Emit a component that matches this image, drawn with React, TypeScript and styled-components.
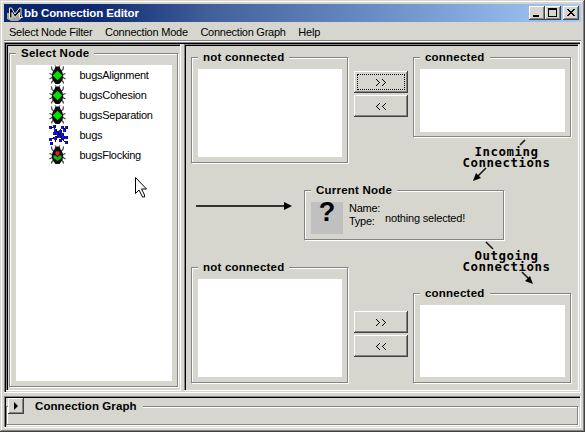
import React from "react";
import styled, { createGlobalStyle } from "styled-components";

const face = "#d6d6ce";
const shade = "#848484";

const GlobalStyle = createGlobalStyle`
  * { box-sizing: border-box; }
  body { margin: 0; background: ${face}; overflow: hidden; }
`;

const Window = styled.div`
  position: relative;
  width: 585px;
  height: 432px;
  padding: 4px;
  display: flex;
  flex-direction: column;
  background: ${face};
  color: #000;
  font: 11px/14px "Liberation Sans", Arial, sans-serif;
  white-space: nowrap;
  cursor: default;
  box-shadow: inset -1px -1px #424142, inset 1px 1px ${face}, inset -2px -2px ${shade}, inset 2px 2px #fff;
`;

const TitleBar = styled.header`
  width: 577px;
  height: 18px;
  padding: 0 2px 0 0;
  display: flex;
  align-items: center;
  background: linear-gradient(to right, #08246b 0%, #0c2870 15%, #42619c 36%, #6b8ec6 65%, #a5cbf7 100%);
`;

const Title = styled.h1`
  margin: 0;
  flex: 1;
  color: #fff;
  font: bold 11.5px/18px "Liberation Sans", Arial, sans-serif;
  letter-spacing: -0.1px;
`;

const WindowButton = styled.button<{ $gap?: boolean }>`
  width: 16px;
  height: 14px;
  margin: 0 0 0 ${(p) => (p.$gap ? 2 : 0)}px;
  padding: 0;
  border: 0;
  background: ${face};
  box-shadow: inset -1px -1px #424142, inset 1px 1px #fff, inset -2px -2px ${shade};
  svg { display: block; }
`;

const MenuBar = styled.nav`
  width: 577px;
  height: 20px;
  padding: 3px 5px 0;
  display: flex;
  gap: 12.5px;
  border-bottom: 1px solid #fff;
  box-shadow: inset 0 -1px ${shade};
`;

const MenuItem = styled.span<{ $spacing?: number }>`
  letter-spacing: ${(p) => p.$spacing ?? -0.22}px;
`;

const Workspace = styled.main`
  width: 577px;
  height: 351px;
  display: flex;
  gap: 3px;
  padding: 2px;
  box-shadow: inset -1px -1px #fff, inset 1px 1px ${shade}, inset 2px 2px #000;
`;

const Pane = styled.section<{ $width: number }>`
  width: ${(p) => p.$width}px;
  height: 347px;
  box-shadow: inset -1px -1px #fff, inset 1px 1px ${shade}, inset 2px 2px #000;
`;

const ListPane = styled(Pane)`
  padding: 9px 2px 2px 3px;
`;

const EditorPane = styled(Pane)`
  padding: 13px 6px 6px 7px;
  display: grid;
  grid-template-rows: 107px 51px 117px;
  row-gap: 26px;
`;

const Group = styled.div<{ $height: number }>`
  position: relative;
  height: ${(p) => p.$height}px;
  padding: 12px 7px 6px;
  border: 1px solid ${shade};
  border-right-color: #fff;
  border-bottom-color: #fff;
  box-shadow: inset -1px -1px ${shade}, inset 1px 1px #fff;
`;

const GroupLabel = styled.span<{ $spacing?: number }>`
  position: absolute;
  left: 6px;
  top: -8px;
  padding: 0 5px;
  background: ${face};
  font: bold 11.5px/15px "Liberation Sans", Arial, sans-serif;
  letter-spacing: ${(p) => p.$spacing ?? 0.22}px;
`;

const ListBox = styled.div<{ $height: number }>`
  height: ${(p) => p.$height}px;
  margin: -1px;
  background: #fff;
`;

const NodeRow = styled.div`
  height: 20px;
  padding-left: 32px;
  display: flex;
  align-items: center;
  gap: 11.5px;
  letter-spacing: -0.28px;
  svg { flex: none; }
`;

const TransferRow = styled.div`
  display: grid;
  grid-template-columns: 158px 54px 159px;
  column-gap: 5px;
  align-items: start;
`;

const LowerTransferRow = styled(TransferRow)`
  align-items: end;
`;

const MoveButtons = styled.div<{ $upper?: boolean }>`
  padding: ${(p) => (p.$upper ? "14px 0 0" : "0 0 27px")};
  display: flex;
  flex-direction: column;
  gap: 2px;
`;

const Button = styled.button`
  width: 54px;
  height: 22px;
  padding: 0;
  border: 0;
  display: grid;
  place-items: center;
  background: ${face};
  box-shadow: inset -1px -1px #424142, inset 1px 1px #fff, inset -2px -2px ${shade};
`;

const FocusRing = styled.span`
  width: 48px;
  height: 16px;
  border: 1px dotted #000;
  display: grid;
  place-items: center;
`;

const FlowRow = styled.div`
  display: flex;
  gap: 12px;
  padding-left: 5px;
`;

const CurrentNode = styled(Group)`
  width: 201px;
  padding: 11px 6px;
  display: flex;
  gap: 6px;
`;

const UnknownIcon = styled.span`
  width: 32px;
  height: 32px;
  background: #c0c0c0;
  text-align: center;
  font: bold 27px/21px "Liberation Sans", Arial, sans-serif;
`;

const Fields = styled.div`
  width: 30px;
  line-height: 13px;
  letter-spacing: -0.25px;
`;

const Selection = styled.span`
  padding-top: 9px;
  letter-spacing: -0.18px;
`;

const Caption = styled.div<{ $top: number }>`
  position: absolute;
  left: 462px;
  top: ${(p) => p.$top}px;
  width: 89px;
  text-align: center;
  font: bold 12.4px/11px "DejaVu Sans Mono", monospace;
  letter-spacing: 0.52px;
`;

const Overlay = styled.svg`
  position: absolute;
  left: 0;
  top: 0;
  pointer-events: none;
`;

const GraphPanel = styled.footer`
  width: 577px;
  height: 32px;
  margin-top: 3px;
  padding: 2px;
  box-shadow: inset -1px -1px #fff, inset 1px 1px ${shade}, inset 2px 2px #000;
`;

const GraphGroup = styled(Group)`
  width: 573px;
  margin-top: 8px;
  padding: 0;
`;

const GraphLabel = styled(GroupLabel)`
  left: 17px;
  padding: 0 6px 0 11px;
`;

const Expander = styled.button`
  position: absolute;
  left: 1px;
  top: -9px;
  width: 16px;
  height: 16px;
  padding: 0;
  border: 0;
  z-index: 1;
  background: ${face};
  box-shadow: inset -1px -1px #424142, inset 1px 1px #fff, inset -2px -2px ${shade};
  svg { display: block; }
`;

const Beetle = ({ spotted = false }: { spotted?: boolean }) => (
  <svg width="20" height="20" viewBox="0 0 20 20">
    <path
      d="M3.500 1.500L4 4.500l3 2.500M15.500 1.500L15 4.500l-3 2.500M1.500 8.500l2.500 1h3M17.500 8.500l-2.500 1h-3M1.500 14l2.500-1.500h3M17.500 14L15 12.500h-3M3.500 18.500L4 16.500l3-2.500M15.500 18.500L15 16.500l-3-2.500"
      fill="none"
      stroke="#3c3c3c"
      strokeWidth="1.2"
    />
    <path d="M8 2L7 0M11 2l1-2" stroke="#777" fill="none" />
    <path d="M7.500 1.500h4l1.200 3 1.800 3 .8 3.500-.8 4-3 4h-4l-3-4-.8-4 .8-3.500 1.800-3z" fill="#0c0c0c" />
    {spotted ? (
      <>
        <path d="M5.500 10.500h2.500l1.500 2 1.500-2h2.500v2.500l-4 3-4-3z" fill="#10b818" />
        <path d="M7.500 7l2-1 2 1v2l-2 2-2-2z" fill="#ff1824" />
      </>
    ) : (
      <path d="M9.500 5.800l4.800 4.700-4.800 4.700-4.800-4.700z" fill="#00e400" />
    )}
  </svg>
);

const swarmDots = [
  [2, 2], [6, 1], [14, 2], [18, 2], [7, 5], [12, 6], [16, 5], [9, 8], [14, 9],
  [6, 8], [18, 12], [11, 11], [7, 13], [15, 12], [2, 14], [3, 18], [12, 15], [18, 17],
];

const Swarm = () => (
  <svg width="20" height="20" viewBox="0 0 20 20" shapeRendering="crispEdges">
    <path d="M1 3l5-1 3 6 5-5 4 0M5 9l6 1 7 3M2 15l9-5 6 7M7 17l4-8" stroke="#080820" strokeWidth="1" fill="none" />
    <path d="M9 6h4v5H9z" fill="#10103c" />
    {swarmDots.map(([x, y]) => (
      <g key={`${x}-${y}`}>
        <rect x={x - 1} y={y - 1} width="3" height="3" fill="#080858" />
        <rect x={x - 1} y={y - 1} width="2" height="3" fill="#1010ff" />
      </g>
    ))}
  </svg>
);

const nodes = [
  { name: "bugsAlignment", icon: <Beetle /> },
  { name: "bugsCohesion", icon: <Beetle /> },
  { name: "bugsSeparation", icon: <Beetle /> },
  { name: "bugs", icon: <Swarm /> },
  { name: "bugsFlocking", icon: <Beetle spotted /> },
];

const Chevrons = ({ back = false }: { back?: boolean }) => (
  <svg width="12" height="7" viewBox="0 0 12 7" shapeRendering="crispEdges">
    {[1, 7].map((x) =>
      [0, 1, 2, 3, 2, 1, 0].map((d, y) => (
        <rect key={`${x}-${y}`} x={x + (back ? 3 - d : d)} y={y} width="1" height="1" />
      ))
    )}
  </svg>
);

const Mover = ({ upper = false }: { upper?: boolean }) => (
  <MoveButtons $upper={upper}>
    <Button>{upper ? <FocusRing><Chevrons /></FocusRing> : <Chevrons />}</Button>
    <Button><Chevrons back /></Button>
  </MoveButtons>
);

const ListGroup = ({ label, height, list }: { label: string; height: number; list: number }) => (
  <Group $height={height}>
    <GroupLabel>{label}</GroupLabel>
    <ListBox $height={list} />
  </Group>
);

const Logo = () => (
  <svg width="20" height="18" viewBox="0 0 20 18">
    <path d="M3 9h3l4 2 4-1 3 1v4l-3 2H7l-4-2z" fill="#a4a4a4" />
    <path d="M5.500 14V4h2l3.500 6 4.500-6h1.500v7l1.500 2.500h-3V8.500L11 13.500 8 8.500V14z" fill="#111" stroke="#ececec" strokeWidth="1" />
  </svg>
);

export default function App() {
  return (
    <>
      <GlobalStyle />
      <Window>
        <TitleBar>
          <Logo />
          <Title>bb Connection Editor</Title>
          <WindowButton aria-label="Minimize">
            <svg width="16" height="14"><path d="M4 9h6v2H4z" /></svg>
          </WindowButton>
          <WindowButton aria-label="Maximize">
            <svg width="16" height="14"><path fillRule="evenodd" d="M3 2h9v9H3zM4 4v6h7V4z" /></svg>
          </WindowButton>
          <WindowButton $gap aria-label="Close">
            <svg width="16" height="14" shapeRendering="crispEdges">
              <path d="M4 3h2v1h1v1h2V4h1V3h2v1h-1v1h-1v1H9v1h1v1h1v1h1v1h-2V9H9V8H7v1H6v1H4V9h1V8h1V7h1V6H6V5H5V4H4z" />
            </svg>
          </WindowButton>
        </TitleBar>
        <MenuBar>
          <MenuItem>Select Node Filter</MenuItem>
          <MenuItem>Connection Mode</MenuItem>
          <MenuItem $spacing={-0.25}>Connection Graph</MenuItem>
          <MenuItem $spacing={-0.15}>Help</MenuItem>
        </MenuBar>
        <Workspace>
          <ListPane $width={175}>
            <Group $height={335}>
              <GroupLabel>Select Node</GroupLabel>
              <ListBox $height={316}>
                {nodes.map((n) => (
                  <NodeRow key={n.name}>{n.icon}<span>{n.name}</span></NodeRow>
                ))}
              </ListBox>
            </Group>
          </ListPane>
          <EditorPane $width={395}>
            <TransferRow>
              <ListGroup label="not connected" height={107} list={88} />
              <Mover upper />
              <ListGroup label="connected" height={81} list={63} />
            </TransferRow>
            <FlowRow>
              <svg width="96" height="51" viewBox="0 0 96 51">
                <path d="M0 16h90" stroke="#333329" strokeWidth="2" />
                <path d="M88 12l8 4-8 4z" />
              </svg>
              <CurrentNode $height={51}>
                <GroupLabel>Current Node</GroupLabel>
                <UnknownIcon>?</UnknownIcon>
                <Fields>Name:<br />Type:</Fields>
                <Selection>nothing selected!</Selection>
              </CurrentNode>
            </FlowRow>
            <LowerTransferRow>
              <ListGroup label="not connected" height={117} list={98} />
              <Mover />
              <ListGroup label="connected" height={91} list={72} />
            </LowerTransferRow>
          </EditorPane>
        </Workspace>
        <GraphPanel>
          <GraphGroup $height={20}>
            <Expander aria-label="Expand">
              <svg width="16" height="16"><path d="M6 4l4 4-4 4z" /></svg>
            </Expander>
            <GraphLabel $spacing={0.08}>Connection Graph</GraphLabel>
          </GraphGroup>
        </GraphPanel>
        <Overlay width="585" height="432" viewBox="0 0 585 432">
          <path
            d="M525 140l-5 5M486 168l-9 9M486 242l7 7M522 272l8 8"
            stroke="#181818"
            strokeWidth="1.6"
            fill="none"
          />
          <path d="M473 181l3-8 5 5zM533 284l-8-3 5-5z" />
          <path d="M135.500 177.500v16l3.500-3.500 3.500 7h2v-2l-3-6h5z" fill="#fff" stroke="#000" />
        </Overlay>
        <Caption $top={146}>Incoming</Caption>
        <Caption $top={157}>Connections</Caption>
        <Caption $top={250}>Outgoing</Caption>
        <Caption $top={261}>Connections</Caption>
      </Window>
    </>
  );
}
